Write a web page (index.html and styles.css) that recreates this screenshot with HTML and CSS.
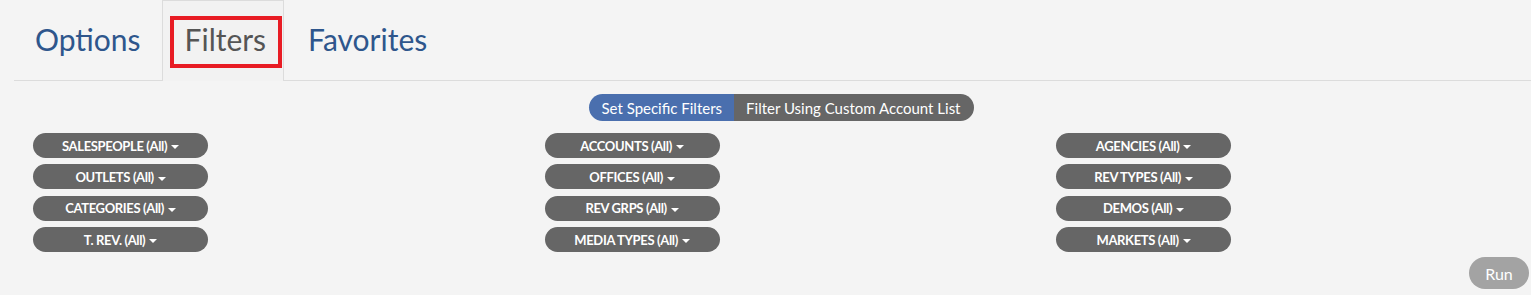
FILE: index.html
```html
<!DOCTYPE html>
<html lang="en">
<head>
    <meta charset="UTF-8">
    <title>Report Filters</title>
    <link rel="stylesheet" href="styles.css">
</head>
<body>

<div class="report-panel">
    <ul class="tabs">
        <li class="tab"><a href="#">Options</a></li>
        <li class="tab active"><a href="#" class="highlight">Filters</a></li>
        <li class="tab"><a href="#">Favorites</a></li>
    </ul>

    <div class="mode-switch">
        <button class="mode selected">Set Specific Filters</button>
        <button class="mode">Filter Using Custom Account List</button>
    </div>

    <div class="filter-grid">
        <div class="filter-col">
            <button class="filter-btn">SALESPEOPLE (All) <span class="caret"></span></button>
            <button class="filter-btn">OUTLETS (All) <span class="caret"></span></button>
            <button class="filter-btn">CATEGORIES (All) <span class="caret"></span></button>
            <button class="filter-btn">T. REV. (All) <span class="caret"></span></button>
        </div>
        <div class="filter-col">
            <button class="filter-btn">ACCOUNTS (All) <span class="caret"></span></button>
            <button class="filter-btn">OFFICES (All) <span class="caret"></span></button>
            <button class="filter-btn">REV GRPS (All) <span class="caret"></span></button>
            <button class="filter-btn">MEDIA TYPES (All) <span class="caret"></span></button>
        </div>
        <div class="filter-col">
            <button class="filter-btn">AGENCIES (All) <span class="caret"></span></button>
            <button class="filter-btn">REV TYPES (All) <span class="caret"></span></button>
            <button class="filter-btn">DEMOS (All) <span class="caret"></span></button>
            <button class="filter-btn">MARKETS (All) <span class="caret"></span></button>
        </div>
    </div>

    <div class="actions">
        <button class="run-btn">Run</button>
    </div>
</div>

</body>
</html>
```

FILE: styles.css
```css
body {
    font-family: Lato, "Open Sans", Arial, sans-serif;
    background-color: #f4f4f4;
    margin: 0;
}
.report-panel {
    padding-left: 14px;
    height: 295px;
    box-sizing: border-box;
}
.tabs {
    list-style: none;
    margin: 0;
    padding: 0;
    display: flex;
    height: 81px;
    border-bottom: 1px solid #dcdcdc;
    box-sizing: border-box;
}
.tab {
    height: 80px;
    display: flex;
    align-items: center;
    box-sizing: border-box;
    border: 1px solid transparent;
    border-bottom: none;
}
.tab a {
    font-size: 30px;
    color: #2e568c;
    text-decoration: none;
    padding: 0 20px 4px 20px;
}
.tab:last-child a {
    padding-left: 23px;
}
.tab.active {
    border-color: #dcdcdc;
    background-color: #f2f2f2;
    height: 81px;
    margin-bottom: -1px;
    padding: 2px 1px 0 7px;
}
.tab.active a {
    color: #555;
    padding: 1px 12px 7px 11px;
    border: 4px solid #e81c24;
}
.mode-switch {
    display: flex;
    justify-content: center;
    margin-top: 13px;
    padding-left: 18px;
}
.mode {
    font-family: inherit;
    font-size: 15px;
    color: #fff;
    border: none;
    height: 27px;
    padding: 0 12px;
    background-color: #666;
    cursor: pointer;
}
.mode.selected {
    background-color: #4a6fae;
    border-radius: 14px 0 0 14px;
}
.mode:last-child {
    border-radius: 0 14px 14px 0;
    padding-right: 13px;
}
.filter-grid {
    display: grid;
    grid-template-columns: repeat(3, 511.5px);
    padding-left: 19px;
    margin-top: 12px;
}
.filter-col {
    display: flex;
    flex-direction: column;
    gap: 6.4px;
}
.filter-btn {
    width: 175px;
    height: 25px;
    border: none;
    border-radius: 13px;
    background-color: #666;
    color: #fff;
    font-family: inherit;
    font-size: 13px;
    font-weight: bold;
    letter-spacing: -0.35px;
    padding: 0;
    cursor: pointer;
}
.caret {
    display: inline-block;
    width: 0;
    height: 0;
    border-left: 4px solid transparent;
    border-right: 4px solid transparent;
    border-top: 4px solid #fff;
    vertical-align: middle;
    margin-left: 1px;
}
.actions {
    display: flex;
    justify-content: flex-end;
    margin-top: 5px;
    padding-right: 2px;
}
.run-btn {
    width: 60px;
    height: 32px;
    border: none;
    border-radius: 16px;
    background-color: #a3a3a3;
    color: #fff;
    font-family: inherit;
    font-size: 16px;
    cursor: pointer;
}
```
